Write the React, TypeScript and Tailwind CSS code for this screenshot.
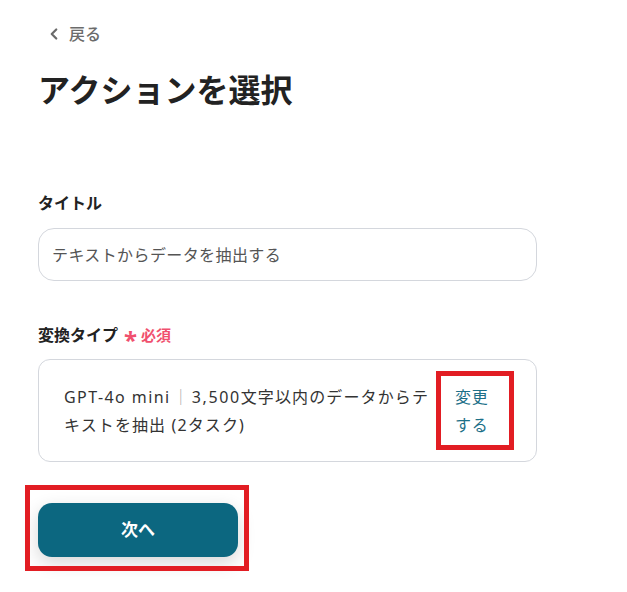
import { ChevronLeft } from "lucide-react";

export default function App() {
  return (
    <div
      className="min-h-[592px] w-[627px] bg-white pl-[38px] pt-[22px] text-[#222]"
      style={{ fontFamily: '"Noto Sans", "Noto Sans CJK JP", sans-serif' }}
    >
      <div className="w-[499px]">
        <a href="#" className="flex h-6 items-center gap-[6px] pl-[7px] text-[16px] font-medium text-[#6b6b6b]">
          <ChevronLeft size={18} strokeWidth={3} />
          <span>戻る</span>
        </a>

        <h1 className="mt-[22px] text-[32px] font-bold leading-[44px] text-[#222]">アクションを選択</h1>

        <label className="mt-[79px] block text-[16px] font-bold leading-6">タイトル</label>
        <div className="mt-[13px] flex h-[53px] items-center rounded-[16px] border border-[#d4d7dd] pl-[13px] text-[16px] tracking-[0.025em] text-[#555]">
          テキストからデータを抽出する
        </div>

        <div className="mt-[42px] flex h-6 items-center">
          <span className="text-[16px] font-bold leading-6">変換タイプ</span>
          <span className="relative top-[5px] ml-[6px] text-[24px] font-bold leading-none text-[#f0506e]">*</span>
          <span className="ml-[4px] text-[15px] font-bold leading-6 text-[#f0506e]">必須</span>
        </div>

        <div className="mt-[12px] flex h-[103px] items-center rounded-[12px] border border-[#d4d7dd] pl-[25px] pr-[22px]">
          <p className="min-w-0 flex-1 text-[16px] leading-[28px] tracking-[0.07em] text-[#333]">
            <span className="tracking-[0.09em]">GPT-4o mini</span>
            <span className="mx-[2px] text-[#aaa]">｜</span>
            <span className="tracking-[0.1em]">3,500</span>文字以内のデータからテキストを抽出 (2タスク)
          </p>
          <button className="flex h-[79px] w-[78px] shrink-0 items-center border-[5px] border-[#e21d23] pl-[14px] pr-[20px] text-left text-[16px] leading-[28px] tracking-[0.04em] text-[#1d7088]">
            変更する
          </button>
        </div>

        <div className="relative mt-[41px] w-[200px]">
          <button className="flex h-[54px] w-[200px] items-center justify-center rounded-[14px] bg-[#0c6780] text-[17px] font-bold text-white shadow-[0_6px_18px_rgba(0,0,0,0.16)]">
            次へ
          </button>
          <span className="pointer-events-none absolute -bottom-[14px] -left-[13px] -right-[11px] -top-[18px] border-[5px] border-[#e21d23]" />
        </div>
      </div>
    </div>
  );
}
